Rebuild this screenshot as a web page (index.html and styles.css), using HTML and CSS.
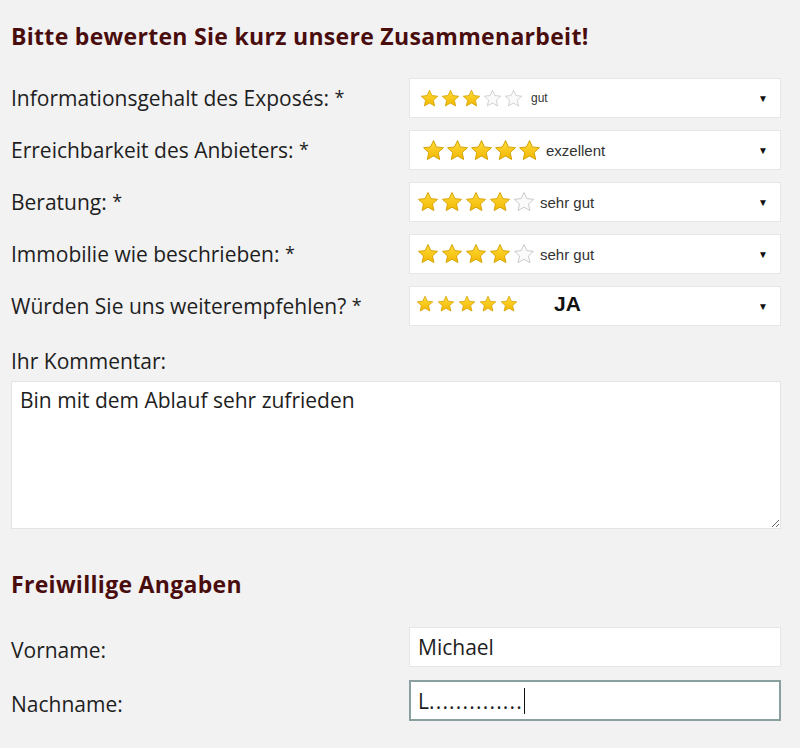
FILE: index.html
```html
<!DOCTYPE html>
<html lang="de">
<head>
<meta charset="utf-8">
<title>Bewertung</title>
<link rel="stylesheet" href="styles.css">
</head>
<body>
<svg class="defs" width="0" height="0" aria-hidden="true">
  <defs>
    <linearGradient id="gold" x1="0" y1="0" x2="0" y2="1">
      <stop offset="0" stop-color="#ffdc3a"/>
      <stop offset="1" stop-color="#f2b600"/>
    </linearGradient>
    <symbol id="star" viewBox="0 0 24 24">
      <polygon points="12,1.6 15.1,8.3 22.4,9.1 16.9,14.1 18.5,21.4 12,17.7 5.5,21.4 7.1,14.1 1.6,9.1 8.9,8.3" stroke-linejoin="round"/>
    </symbol>
  </defs>
</svg>
<main class="form">
  <h2 class="title">Bitte bewerten Sie kurz unsere Zusammenarbeit!</h2>

  <div class="rows">
    <div class="row">
      <label class="label">Informationsgehalt des Exposés: <span class="req">*</span></label>
      <div class="select s1">
        <span class="stars">
          <svg class="star on"><use href="#star"/></svg><svg class="star on"><use href="#star"/></svg><svg class="star on"><use href="#star"/></svg><svg class="star off"><use href="#star"/></svg><svg class="star off"><use href="#star"/></svg>
        </span>
        <span class="val v1">gut</span>
        <span class="arrow">▼</span>
      </div>
    </div>
    <div class="row">
      <label class="label">Erreichbarkeit des Anbieters: <span class="req">*</span></label>
      <div class="select s2">
        <span class="stars">
          <svg class="star on"><use href="#star"/></svg><svg class="star on"><use href="#star"/></svg><svg class="star on"><use href="#star"/></svg><svg class="star on"><use href="#star"/></svg><svg class="star on"><use href="#star"/></svg>
        </span>
        <span class="val v2">exzellent</span>
        <span class="arrow">▼</span>
      </div>
    </div>
    <div class="row">
      <label class="label">Beratung: <span class="req">*</span></label>
      <div class="select s3">
        <span class="stars">
          <svg class="star on"><use href="#star"/></svg><svg class="star on"><use href="#star"/></svg><svg class="star on"><use href="#star"/></svg><svg class="star on"><use href="#star"/></svg><svg class="star off"><use href="#star"/></svg>
        </span>
        <span class="val v3">sehr gut</span>
        <span class="arrow">▼</span>
      </div>
    </div>
    <div class="row">
      <label class="label">Immobilie wie beschrieben: <span class="req">*</span></label>
      <div class="select s3">
        <span class="stars">
          <svg class="star on"><use href="#star"/></svg><svg class="star on"><use href="#star"/></svg><svg class="star on"><use href="#star"/></svg><svg class="star on"><use href="#star"/></svg><svg class="star off"><use href="#star"/></svg>
        </span>
        <span class="val v3">sehr gut</span>
        <span class="arrow">▼</span>
      </div>
    </div>
    <div class="row">
      <label class="label">Würden Sie uns weiterempfehlen? <span class="req">*</span></label>
      <div class="select s5">
        <span class="stars">
          <svg class="star on"><use href="#star"/></svg><svg class="star on"><use href="#star"/></svg><svg class="star on"><use href="#star"/></svg><svg class="star on"><use href="#star"/></svg><svg class="star on"><use href="#star"/></svg>
        </span>
        <span class="val v5">JA</span>
        <span class="arrow">▼</span>
      </div>
    </div>
  </div>

  <label class="label comment-label">Ihr Kommentar:</label>
  <textarea class="comment" readonly>Bin mit dem Ablauf sehr zufrieden</textarea>

  <h2 class="title title2">Freiwillige Angaben</h2>

  <div class="rows rows2">
    <div class="row">
      <label class="label lower">Vorname:</label>
      <div class="input">Michael</div>
    </div>
    <div class="row">
      <label class="label lower">Nachname:</label>
      <div class="input focus">L<span class="dots">..............</span><span class="caret"></span></div>
    </div>
  </div>
</main>
</body>
</html>
```

FILE: styles.css
```css
html, body {
  margin: 0;
  padding: 0;
  background: #f2f2f2;
}

body {
  font-family: "Open Sans", "Noto Sans", sans-serif;
  color: #1e1e1e;
}

.defs {
  position: absolute;
  width: 0;
  height: 0;
}

.form {
  width: 770px;
  padding: 22px 0 0 11px;
}

.title {
  margin: 0;
  font-size: 23px;
  line-height: 28px;
  font-weight: 700;
  color: #4a0d0e;
  letter-spacing: 0.3px;
}

.rows {
  display: flex;
  flex-direction: column;
  gap: 12px;
  margin-top: 28px;
}

.row {
  display: grid;
  grid-template-columns: 398px 1fr;
  align-items: center;
}

.label {
  font-size: 21px;
  line-height: 26px;
  color: #1e1e1e;
}

.label.lower {
  padding-top: 6px;
}

.req {
  font-size: 18px;
  position: relative;
  top: -2px;
}

.select, .input {
  box-sizing: border-box;
  height: 40px;
  background: #fff;
  border: 1px solid #e6e6e6;
  display: flex;
  align-items: center;
}

.select {
  padding: 0 10px 0 10px;
}

.stars {
  display: flex;
  align-items: center;
}

.star {
  flex: none;
}

.star.on {
  fill: url(#gold);
  stroke: #d3a000;
  stroke-width: 1;
}

.star.off {
  fill: #fafafa;
  stroke: #c6c6c6;
  stroke-width: 1;
}

.s1 .star { width: 19px; height: 19px; margin-right: 2px; }
.s2 .star { width: 23px; height: 23px; margin-right: 1px; }
.s2 { padding-left: 12px; }
.s3 .star { width: 22px; height: 22px; margin-right: 2px; }
.s3 { padding-left: 7px; }
.s5 .star { width: 18px; height: 18px; margin-right: 3px; }
.s5 { padding-left: 6px; align-items: center; }
.s5 .stars { margin-top: -4px; }

.val {
  font-family: "Liberation Sans", Arial, sans-serif;
  color: #333;
  margin-left: 4px;
}

.v1 { font-size: 12px; margin-left: 6px; }
.v2 { font-size: 15px; }
.v3 { font-size: 15px; margin-left: 3px; }
.v5 {
  font-size: 21px;
  font-weight: 700;
  color: #111;
  margin-left: 33px;
  margin-top: -4px;
}

.arrow {
  margin-left: auto;
  font-size: 10px;
  color: #111;
  padding-right: 2px;
}

.comment-label {
  display: block;
  margin-top: 22px;
}

.comment {
  display: block;
  box-sizing: border-box;
  width: 770px;
  height: 148px;
  margin-top: 7px;
  padding: 5px 8px;
  background: #fff;
  border: 1px solid #e3e3e3;
  font-family: "Open Sans", "Noto Sans", sans-serif;
  font-size: 21px;
  line-height: 26px;
  color: #1e1e1e;
  outline: none;
}

.title2 {
  margin-top: 41px;
}

.rows2 {
  margin-top: 29px;
  gap: 13px;
}

.input {
  padding: 0 8px;
  font-size: 21px;
  color: #1e1e1e;
}

.input.focus {
  height: 41px;
  border: 2px solid #8aa0a0;
  padding-left: 7px;
}

.dots {
  letter-spacing: 1.2px;
}

.caret {
  display: inline-block;
  width: 1px;
  height: 26px;
  background: #111;
  margin-left: 1px;
}
```
